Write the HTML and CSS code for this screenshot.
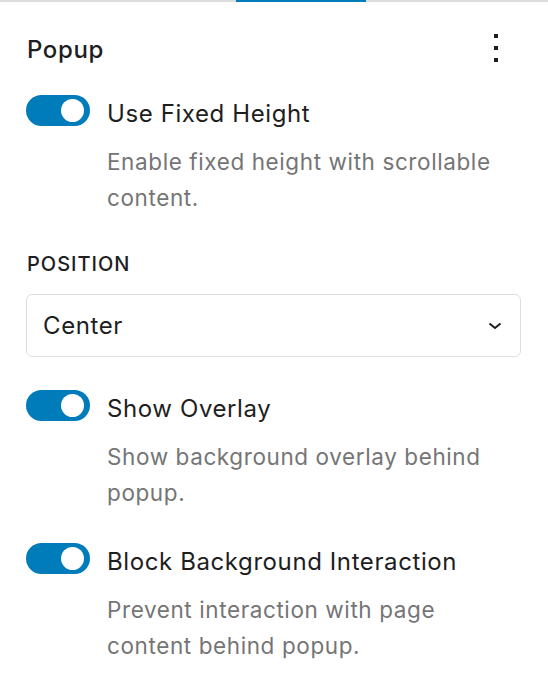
FILE: index.html
```html
<!DOCTYPE html>
<html>
<head>
<meta charset="utf-8">
<link rel="stylesheet" href="styles.css">
</head>
<body>
<div class="tabs">
  <div class="tab-line"></div>
  <div class="tab-active"></div>
  <div class="tab-line tab-rest"></div>
</div>
<div class="panel">
  <div class="header">
    <h2 class="title">Popup</h2>
    <svg class="kebab" width="24" height="40" viewBox="0 0 24 40" aria-hidden="true">
      <rect x="10" y="4" width="4" height="4" fill="#1e1e1e"/>
      <rect x="10" y="16" width="4" height="4" fill="#1e1e1e"/>
      <rect x="10" y="28" width="4" height="4" fill="#1e1e1e"/>
    </svg>
  </div>

  <div class="control">
    <span class="toggle"><span class="knob"></span></span>
    <div class="control-text">
      <div class="label">Use Fixed Height</div>
      <p class="help">Enable fixed height with scrollable content.</p>
    </div>
  </div>

  <div class="field">
    <div class="field-label">POSITION</div>
    <div class="select">
      <span class="select-value">Center</span>
      <svg class="chevron" width="14" height="8" viewBox="0 0 14 8" aria-hidden="true">
        <polyline points="1.5,1.5 7,6 12.5,1.5" fill="none" stroke="#1e1e1e" stroke-width="2"/>
      </svg>
    </div>
  </div>

  <div class="control">
    <span class="toggle"><span class="knob"></span></span>
    <div class="control-text">
      <div class="label">Show Overlay</div>
      <p class="help">Show background overlay behind popup.</p>
    </div>
  </div>

  <div class="control">
    <span class="toggle"><span class="knob"></span></span>
    <div class="control-text">
      <div class="label">Block Background Interaction</div>
      <p class="help">Prevent interaction with page content behind popup.</p>
    </div>
  </div>
</div>
</body>
</html>
```

FILE: styles.css
```css
* { box-sizing: border-box; }
html, body { margin: 0; padding: 0; background: #fff; }
body {
  font-family: Inter, "Noto Sans", "Liberation Sans", sans-serif;
  color: #1e1e1e;
  width: 548px;
}
.tabs { display: flex; height: 2px; }
.tab-line { width: 236px; background: #dddddd; }
.tab-rest { flex: 1; }
.tab-active { width: 130px; background: #007cba; }

.panel { padding: 0 27px 0 26px; }

.header {
  display: flex;
  align-items: center;
  justify-content: space-between;
  height: 48px;
  margin-top: 24px;
}
.title {
  margin: 0;
  font-size: 24px;
  font-weight: 500;
  line-height: 30px;
  letter-spacing: 0.6px;
  padding-left: 1px;
}
.kebab { margin-right: 13px; display: block; }

.control {
  display: flex;
  align-items: flex-start;
  gap: 17px;
  margin-top: 21px;
}
.control + .control { margin-top: 32px; }
.field + .control { margin-top: 33px; }

.toggle {
  flex: none;
  position: relative;
  width: 64px;
  height: 31px;
  border-radius: 16px;
  background: #007cba;
}
.knob {
  position: absolute;
  top: 4px;
  left: 35px;
  width: 23px;
  height: 23px;
  border-radius: 50%;
  background: #fff;
}
.control-text { flex: 1; }
.label {
  font-size: 24px;
  line-height: 31px;
  letter-spacing: 0.6px;
  padding-top: 3px;
}
.help {
  margin: 15px 0 0;
  font-size: 22.5px;
  line-height: 36px;
  letter-spacing: 0.6px;
  color: #757575;
  padding-right: 20px;
}

.field { margin-top: 36px; }
.field-label {
  font-size: 20px;
  font-weight: 500;
  line-height: 24px;
  padding-left: 1px;
  letter-spacing: 1px;
}
.select {
  margin-top: 18px;
  height: 63px;
  border: 1.5px solid #dedede;
  border-radius: 6px;
  display: flex;
  align-items: center;
  justify-content: space-between;
  padding: 0 18px 0 16px;
}
.select-value { font-size: 24px; letter-spacing: 0.6px; }
.chevron { display: block; }
```
